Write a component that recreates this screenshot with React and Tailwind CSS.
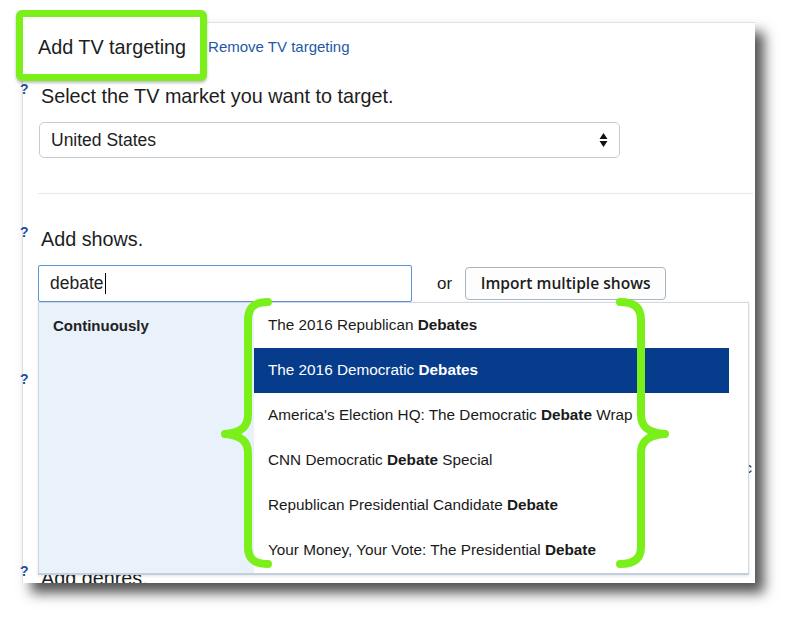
import React from "react";

const shows = [
  { pre: "The 2016 Republican ", bold: "Debates", post: "" },
  { pre: "The 2016 Democratic ", bold: "Debates", post: "", active: true },
  { pre: "America's Election HQ: The Democratic ", bold: "Debate", post: " Wrap" },
  { pre: "CNN Democratic ", bold: "Debate", post: " Special" },
  { pre: "Republican Presidential Candidate ", bold: "Debate", post: "" },
  { pre: "Your Money, Your Vote: The Presidential ", bold: "Debate", post: "" },
];

function Help() {
  return (
    <span className="absolute left-[-18px] top-[-2px] text-[14px] leading-none font-bold text-[#1c4f9e]">?</span>
  );
}

function Label({ children, className = "" }) {
  return (
    <div className={`relative pl-[3px] text-[19.8px] leading-[24px] text-[#1d1d1d] ${className}`}>
      <Help />
      {children}
    </div>
  );
}

function Braces() {
  return (
    <svg className="absolute inset-0 z-20 pointer-events-none" width="800" height="627" viewBox="0 0 800 627">
      <g fill="none" stroke="#7bef1a" strokeWidth="8" strokeLinecap="round" strokeLinejoin="round">
        <path d="M268 302 C256 302 248 306 248 320 L248 415 C248 428 239 433 225 434 C239 435 248 440 248 453 L248 547 C248 560 256 564 268 564" />
        <path d="M620 302 C632 302 641 306 641 320 L641 415 C641 428 650 433 665 434 C650 435 641 440 641 453 L641 547 C641 560 632 564 620 564" />
      </g>
    </svg>
  );
}

export default function App() {
  return (
    <div className="relative w-[800px] h-[627px] bg-white pt-[22px] pl-[22px] font-['Liberation_Sans',Arial,sans-serif] text-[#1d1d1d]">
      <div className="relative w-[733px] h-[561px] bg-white border-l border-t border-[#e0e0e0] shadow-[9px_10px_12px_rgba(0,0,0,0.68)] pl-[15px]">
        {/* header */}
        <div className="flex items-center h-[24px] mt-[12px]">
          <span className="relative text-[19.8px] leading-[24px]">
            <span className="absolute left-[-22px] top-[-25px] w-[191px] h-[71px] bg-white border-[7px] border-[#7bef1a] rounded-[6px] shadow-[0_2px_3px_rgba(0,0,0,0.25)]" />
            <span className="relative">Add TV targeting</span>
          </span>
          <a className="ml-[22px] text-[15px] text-[#1e59a6]" href="#">Remove TV targeting</a>
        </div>

        <Label className="mt-[25px]">Select the TV market you want to target.</Label>

        <div className="mt-[14px] ml-px w-[581px] h-[36px] flex items-center justify-between pl-[11px] pr-[11px] border border-[#c4ccd6] rounded-[5px] bg-white">
          <span className="text-[17.5px]">United States</span>
          <svg width="9" height="16" viewBox="0 0 9 16">
            <path d="M4.5 1 L8.5 7 L0.5 7 Z M0.5 9 L8.5 9 L4.5 15 Z" fill="#111" />
          </svg>
        </div>

        <div className="mt-[35px] w-[715px] h-px bg-[#e8e8e8]" />

        <Label className="mt-[33px]">Add shows.</Label>

        <div className="relative mt-[14px] flex items-center h-[37px]">
          <div className="w-[374px] h-[37px] flex items-center pl-[11px] border border-[#5a93d6] rounded-[2px] bg-white">
            <span className="text-[17.5px]">debate</span>
            <span className="w-px h-[21px] bg-black ml-px" />
          </div>
          <span className="ml-[25px] text-[17px]">or</span>
          <button className="ml-[13px] w-[201px] h-[33px] border border-[#aab5c2] rounded-[4px] bg-[#fdfdfd] text-[15.6px] font-semibold font-['Open_Sans',sans-serif] text-[#1d1d1d]">
            Import multiple shows
          </button>

          {/* suggestions menu */}
          <div className="absolute z-10 left-0 top-full w-[711px] h-[273px] flex bg-white border-t border-r border-[#d3d9e0] border-b-2 border-b-[#c3cfdc] shadow-[0_1px_3px_rgba(0,0,0,0.12)]">
            <div className="w-[216px] h-full bg-[#e9f1fb] border-l border-[#cdd7e2] pl-[14px] pt-[11px]">
              <span className="text-[15px] leading-[20px] font-bold text-[#222]">Continuously</span>
            </div>
            <ul className="flex-1 pr-[19px]">
              {shows.map((s) => (
                <li
                  key={s.pre}
                  className={`h-[45px] flex items-center pl-[14px] text-[15.3px] ${s.active ? "bg-[#063c8b] text-white" : "text-[#1a1a1a]"}`}
                >
                  <span>
                    {s.pre}
                    <b>{s.bold}</b>
                    {s.post}
                  </span>
                </li>
              ))}
            </ul>
          </div>
        </div>

        {/* content under the menu */}
        <Label className="mt-[72px]">Select when your ads show.</Label>
        <div className="mt-[58px] flex justify-end pr-[3px] h-[24px] items-center text-[15px]">Specific</div>
        <div className="mt-[86px] h-[17px] relative">
          <Help />
          <div className="h-[17px] overflow-hidden pl-[3px] text-[19.8px] leading-[24px]">Add genres.</div>
        </div>
      </div>
      <Braces />
    </div>
  );
}
